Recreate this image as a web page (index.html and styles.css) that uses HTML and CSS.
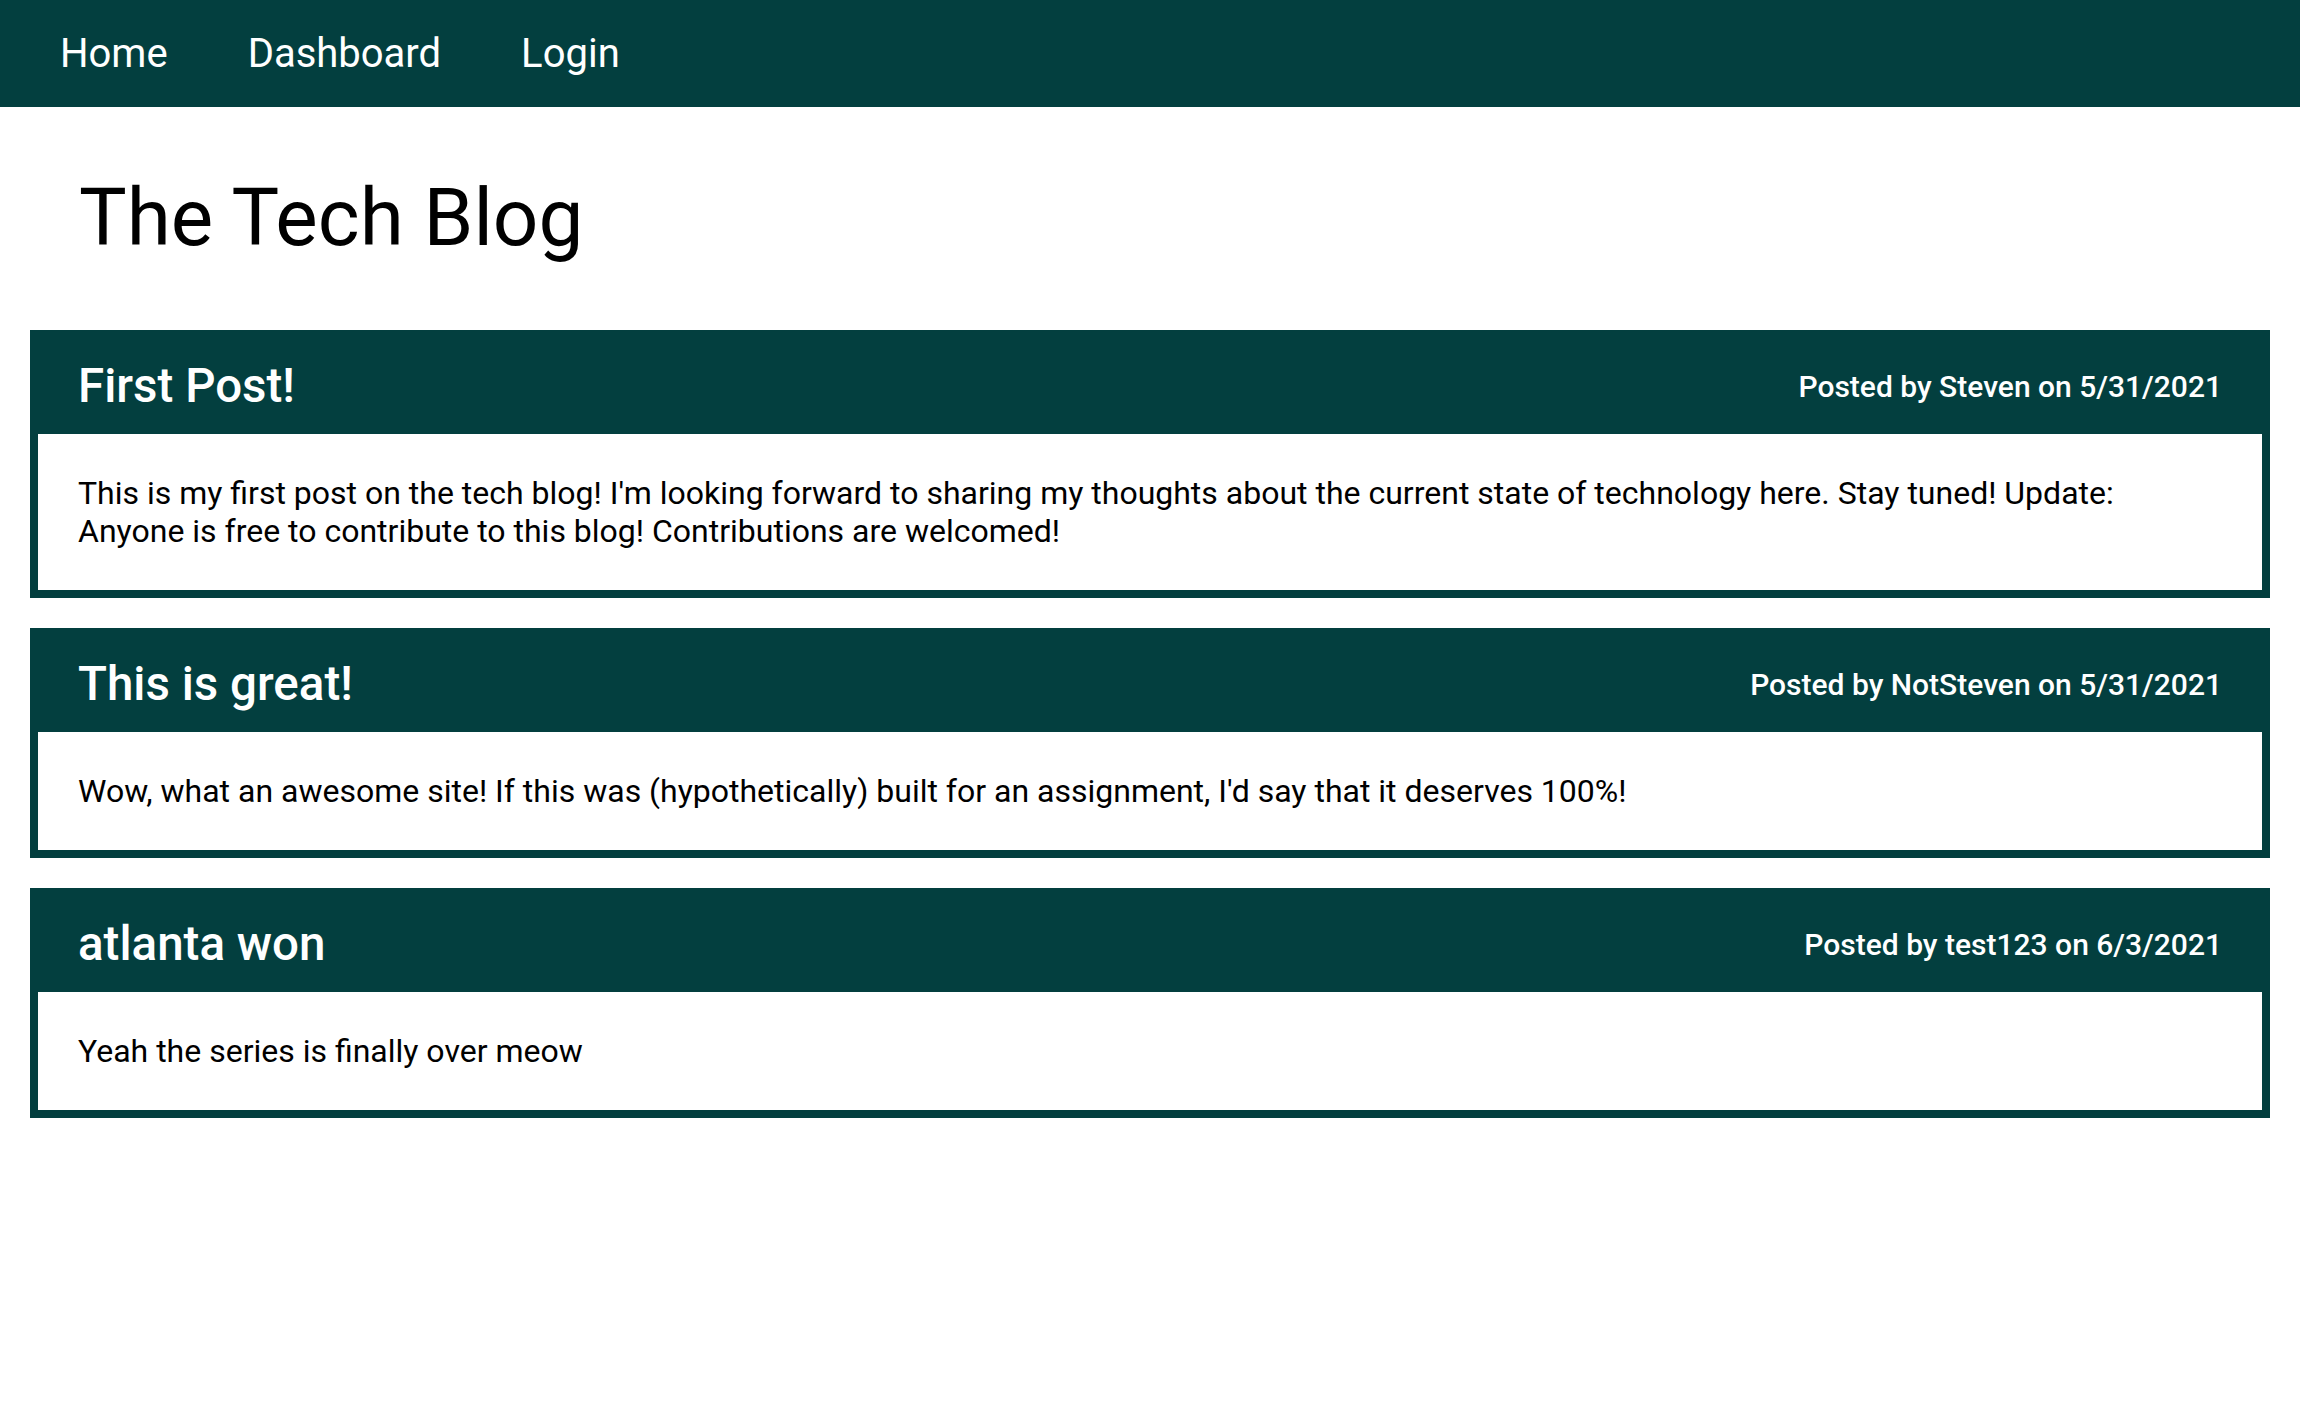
FILE: index.html
```html
<!DOCTYPE html>
<html lang="en">
<head>
  <meta charset="UTF-8">
  <meta name="viewport" content="width=device-width, initial-scale=1.0">
  <title>The Tech Blog</title>
  <link rel="stylesheet" href="styles.css">
</head>
<body>
  <nav class="topnav">
    <a href="#">Home</a>
    <a href="#">Dashboard</a>
    <a href="#">Login</a>
  </nav>

  <h1 class="site-title">The Tech Blog</h1>

  <main class="posts">
    <article class="post">
      <div class="post-head">
        <h2>First Post!</h2>
        <span class="post-meta">Posted by Steven on 5/31/2021</span>
      </div>
      <p class="post-body">This is my first post on the tech blog! I'm looking forward to sharing my thoughts about the current state of technology here. Stay tuned! Update: Anyone is free to contribute to this blog! Contributions are welcomed!</p>
    </article>

    <article class="post">
      <div class="post-head">
        <h2>This is great!</h2>
        <span class="post-meta">Posted by NotSteven on 5/31/2021</span>
      </div>
      <p class="post-body">Wow, what an awesome site! If this was (hypothetically) built for an assignment, I'd say that it deserves 100%!</p>
    </article>

    <article class="post">
      <div class="post-head">
        <h2>atlanta won</h2>
        <span class="post-meta">Posted by test123 on 6/3/2021</span>
      </div>
      <p class="post-body">Yeah the series is finally over meow</p>
    </article>
  </main>
</body>
</html>
```

FILE: styles.css
```css
body {
  margin: 0;
  font-family: Roboto, "Liberation Sans", sans-serif;
  background-color: #fff;
  color: #000;
}
.topnav {
  background-color: #033f3f;
  height: 107px;
  display: flex;
  align-items: center;
  padding: 0 20px;
}
.topnav a {
  color: #fff;
  text-decoration: none;
  font-size: 40px;
  padding: 0 40px;
}
.site-title {
  font-size: 80px;
  font-weight: 400;
  margin: 64px 0 65px;
  padding-left: 79px;
}
.posts {
  padding: 0 30px;
}
.post {
  border: 8px solid #033f3f;
  margin-bottom: 30px;
}
.post-head {
  background-color: #033f3f;
  color: #fff;
  display: flex;
  justify-content: space-between;
  align-items: center;
  padding: 20px 40px;
}
.post-head h2 {
  margin: 0;
  font-size: 47.5px;
  font-weight: 500;
}
.post-meta {
  font-size: 30px;
  font-weight: 500;
}
.post-body {
  margin: 0;
  padding: 40px;
  font-size: 32px;
}
```
